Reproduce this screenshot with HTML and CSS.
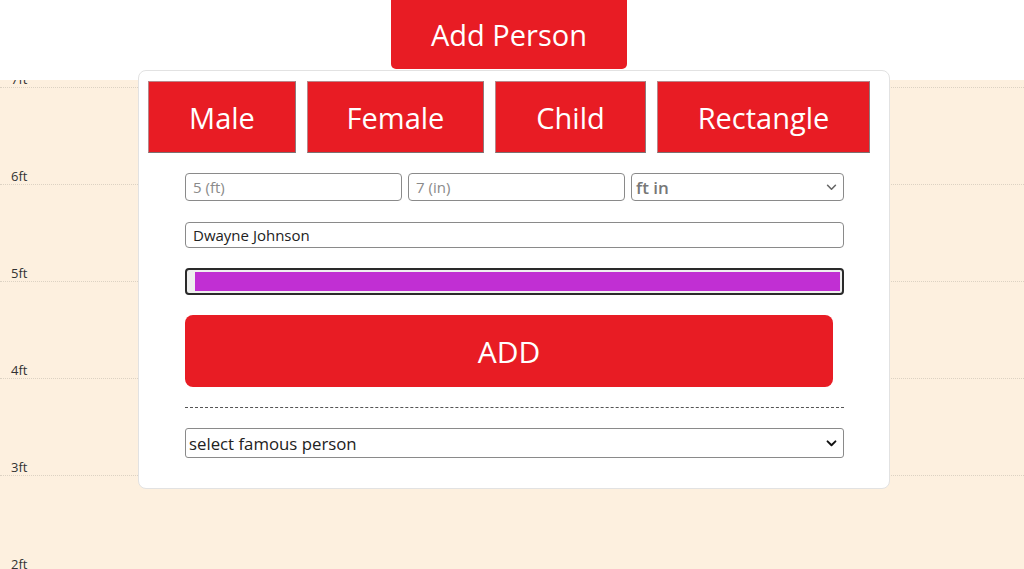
FILE: index.html
```html
<!DOCTYPE html>
<html>
<head>
<meta charset="utf-8">
<link rel="stylesheet" href="styles.css">
</head>
<body>
<header class="top">
  <button class="add-person">Add Person</button>
</header>
<main class="chart">
  <div class="ruler">
    <div class="row"><span>7ft</span></div>
    <div class="row"><span>6ft</span></div>
    <div class="row"><span>5ft</span></div>
    <div class="row"><span>4ft</span></div>
    <div class="row"><span>3ft</span></div>
    <div class="row"><span>2ft</span></div>
  </div>
</main>
<section class="panel">
  <div class="tabs">
    <button class="tab tab-male">Male</button>
    <button class="tab tab-female">Female</button>
    <button class="tab tab-child">Child</button>
    <button class="tab tab-rect">Rectangle</button>
  </div>
  <div class="form">
    <div class="height-row">
      <input class="field" type="text" placeholder="5 (ft)">
      <input class="field" type="text" placeholder="7 (in)">
      <div class="unit">
        <span>ft in</span>
        <svg class="chev chev-light" viewBox="0 0 12 8" width="11" height="7"><path d="M1.5 1.5 L6 6 L10.5 1.5" fill="none" stroke="#666" stroke-width="1.8" stroke-linecap="round" stroke-linejoin="round"/></svg>
      </div>
    </div>
    <input class="field name" type="text" value="Dwayne Johnson">
    <div class="color"><div class="swatch"></div></div>
    <button class="add">ADD</button>
    <hr class="sep">
    <div class="famous">
      <span>select famous person</span>
      <svg class="chev" viewBox="0 0 12 8" width="11" height="7"><path d="M1.5 1.5 L6 6 L10.5 1.5" fill="none" stroke="#111" stroke-width="2.2" stroke-linecap="round" stroke-linejoin="round"/></svg>
    </div>
  </div>
</section>
</body>
</html>
```
FILE: styles.css
```css
* { box-sizing: border-box; }
html, body { margin: 0; padding: 0; }
body {
  position: relative;
  width: 1024px;
  height: 569px;
  overflow: hidden;
  background: #ffffff;
  font-family: "Open Sans", "Noto Sans", sans-serif;
}
button { font-family: inherit; cursor: pointer; }

.top {
  height: 80px;
  display: flex;
  justify-content: center;
  padding-right: 6px;
}
.add-person {
  width: 236px;
  height: 69px;
  border: none;
  border-radius: 0 0 5px 5px;
  background: #e81c24;
  color: #fff;
  font-size: 29px;
  padding: 0;
}

.chart {
  height: 489px;
  background: #fdf0df;
  overflow: hidden;
}
.ruler { margin-top: -89px; }
.row {
  height: 97px;
  border-bottom: 1px dotted #dcd2c3;
  display: flex;
  align-items: flex-end;
  padding: 0 0 0 11px;
  font-size: 13px;
  line-height: 16px;
  color: #333;
}

.panel {
  position: absolute;
  left: 138px;
  top: 70px;
  width: 752px;
  height: 419px;
  background: #fff;
  border: 1px solid #e2e2e2;
  border-radius: 8px;
  padding: 10px 0 0 9px;
}
.tabs {
  display: flex;
  gap: 11px;
}
.tab {
  height: 72px;
  background: #e81c24;
  color: #fff;
  font-size: 29px;
  padding: 0;
  border: 1px solid #b9868a;
  border-right-color: #8e7a7c;
  border-bottom-color: #7c7070;
}
.tab-male { width: 148px; }
.tab-female { width: 177px; }
.tab-child { width: 151px; }
.tab-rect { width: 213px; }

.form {
  width: 659px;
  margin: 20px 0 0 37px;
  display: flex;
  flex-direction: column;
}
.height-row {
  display: flex;
  gap: 6px;
  height: 28px;
}
.field {
  height: 28px;
  border: 1px solid #8a8a8a;
  border-radius: 4px;
  padding: 0 7px;
  font-family: inherit;
  font-size: 15px;
  color: #222;
  background: #fff;
  outline: none;
}
.field::placeholder { color: #8a8a8a; }
.height-row .field { width: 217px; }
.unit {
  flex: 1;
  border: 1px solid #8a8a8a;
  border-radius: 4px;
  display: flex;
  align-items: center;
  justify-content: space-between;
  padding: 0 6px 0 4px;
  font-size: 17px;
  font-weight: 600;
  color: #777;
}
.name {
  margin-top: 21px;
  height: 26px;
  width: 100%;
}
.color {
  margin-top: 20px;
  height: 27px;
  border: 2px solid #2a2a2a;
  border-radius: 4px;
  padding: 2px 2px 2px 8px;
  background: #efefef;
}
.swatch {
  height: 100%;
  background: #c12fd3;
}
.add {
  margin-top: 20px;
  width: 648px;
  height: 72px;
  border: none;
  border-radius: 8px;
  background: #e81c24;
  color: #fff;
  font-size: 30px;
  padding: 0;
}
.sep {
  margin: 20px 0 0;
  border: none;
  border-top: 1px dashed #555;
  height: 0;
}
.famous {
  margin-top: 20px;
  height: 30px;
  border: 1px solid #8a8a8a;
  border-radius: 3px;
  display: flex;
  align-items: center;
  justify-content: space-between;
  padding: 0 6px 0 3px;
  font-size: 16.8px;
  color: #222;
}
.chev { display: block; }
```
